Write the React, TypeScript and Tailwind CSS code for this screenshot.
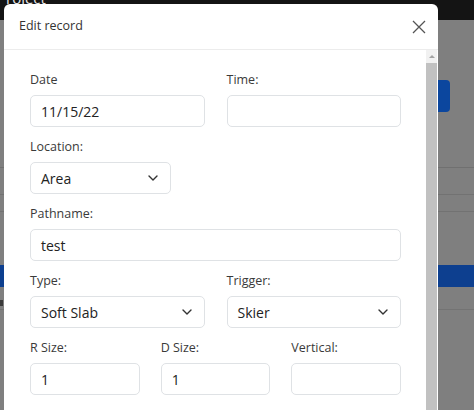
import React from 'react';

const Chevron = () => (
  <svg width="10" height="6" viewBox="0 0 10 6" fill="none" className="shrink-0">
    <path d="M1 1l4 4 4-4" stroke="#333" strokeWidth="1.4" strokeLinecap="round" strokeLinejoin="round" />
  </svg>
);

const Field = ({ label, value, select }: { label: string; value?: string; select?: boolean }) => (
  <div className="flex flex-col">
    <label className="text-[12.5px] leading-[21px] text-[#3a3a3a] mb-[5px]">{label}</label>
    <div className="h-[32px] rounded-[5px] border border-[#dfe2e5] flex items-center justify-between pl-[10px] pr-[12px] text-[14px] text-[#222]">
      <span>{value}</span>
      {select && <Chevron />}
    </div>
  </div>
);

export default function App() {
  return (
    <div className="relative w-[474px] h-[410px] overflow-hidden bg-[#7f7f7f] font-['Open_Sans',sans-serif]">
      {/* page behind the backdrop */}
      <div className="h-[20px] bg-[#141414] pl-[6px] flex flex-col overflow-hidden">
        <div className="text-[15px] leading-[15px] -mt-[9px] text-[#e6e6e6]">roject</div>
      </div>
      <div className="flex flex-col">
        <div className="mt-[60px] ml-[420px] w-[30px] h-[32px] rounded-[4px] bg-[#0b469e]" />
        <div className="mt-[55px] h-px bg-[#707070]" />
        <div className="mt-[26px] h-px bg-[#727272]" />
        <div className="mt-[16px] h-px bg-[#727272]" />
        <div className="mt-[53px] h-[22px] bg-[#0d3f8f]" />
        <div className="mt-[13px] pl-[0px] h-[6px] w-[3px] bg-[#3a3a3a]" />
        <div className="mt-[3px] h-px bg-[#737373]" />
      </div>

      {/* modal */}
      <div className="absolute left-[4px] top-[4px] w-[434px] h-[420px] bg-white rounded-t-[6px] flex flex-col">
        <div className="h-[46px] shrink-0 flex items-center justify-between pl-[15px] pr-[12px] border-b border-[#ececec]">
          <span className="text-[12.5px] text-[#333]">Edit record</span>
          <svg width="14" height="14" viewBox="0 0 14 14" fill="none">
            <path d="M1 1l12 12M13 1L1 13" stroke="#555" strokeWidth="1.3" />
          </svg>
        </div>
        <div className="flex flex-1">
          <div className="flex-1 pl-[26px] pr-[25px] pt-[19px] flex flex-col gap-[9px]">
            <div className="grid grid-cols-2 gap-x-[22px]">
              <Field label="Date" value="11/15/22" />
              <Field label="Time:" />
            </div>
            <div className="w-[141px]">
              <Field label="Location:" value="Area" select />
            </div>
            <Field label="Pathname:" value="test" />
            <div className="grid grid-cols-2 gap-x-[22px]">
              <Field label="Type:" value="Soft Slab" select />
              <Field label="Trigger:" value="Skier" select />
            </div>
            <div className="grid grid-cols-3 gap-x-[21px]">
              <Field label="R Size:" value="1" />
              <Field label="D Size:" value="1" />
              <Field label="Vertical:" />
            </div>
          </div>
          <div className="w-[11px] mr-[1px] bg-[#f1f1f1] flex flex-col">
            <div className="h-[13px] flex items-center justify-center">
              <div className="w-0 h-0 border-l-[3px] border-r-[3px] border-b-[3px] border-l-transparent border-r-transparent border-b-[#a3a3a3]" />
            </div>
            <div className="flex-1 bg-[#c1c1c1]" />
          </div>
        </div>
      </div>
    </div>
  );
}
